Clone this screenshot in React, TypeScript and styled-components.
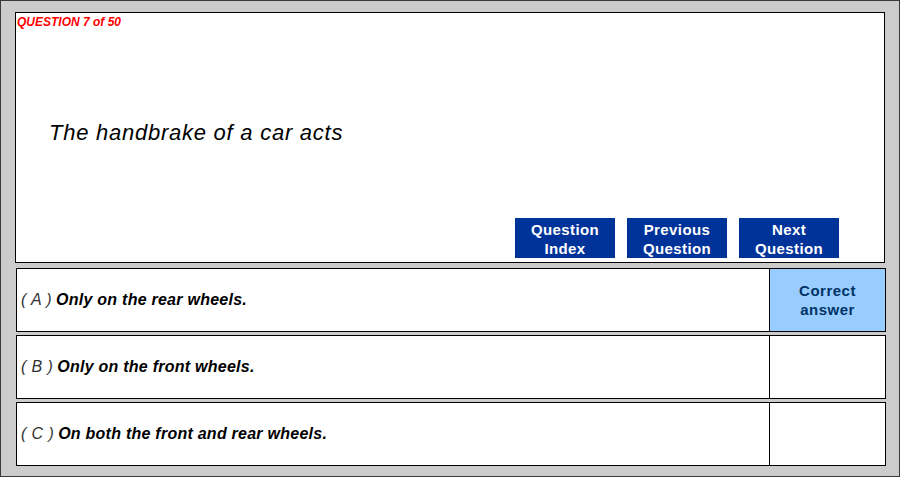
import styled, { createGlobalStyle } from 'styled-components'

const Global = createGlobalStyle`
  html, body {
    margin: 0;
    padding: 0;
    background: #ffffff;
    font-family: Arial, "Liberation Sans", sans-serif;
  }
`

const Frame = styled.div`
  width: 900px;
  height: 477px;
  box-sizing: border-box;
  border: 1px solid #3a3a3a;
  background: #cccccc;
  padding: 11px 14px 0 14px;
`

const QuestionPanel = styled.div`
  width: 870px;
  height: 251px;
  box-sizing: border-box;
  border: 1px solid #000;
  background: #fff;
  display: flex;
  flex-direction: column;
`

const Counter = styled.div`
  margin: 2px 0 0 1px;
  font-size: 12px;
  line-height: 14px;
  font-weight: bold;
  font-style: italic;
  color: #ff0000;
`

const Prompt = styled.div`
  margin: 91px 0 0 33px;
  font-size: 22px;
  line-height: 26px;
  font-style: italic;
  letter-spacing: 0.75px;
  color: #000;
`

const NavBar = styled.div`
  margin: auto 45px 4px 0;
  display: flex;
  justify-content: flex-end;
  gap: 12px;
`

const NavButton = styled.button`
  width: 100px;
  height: 40px;
  padding: 1px 0 0 0;
  border: none;
  background: #003399;
  color: #fff;
  font-family: Arial, "Liberation Sans", sans-serif;
  font-size: 15px;
  font-weight: bold;
  line-height: 19px;
  letter-spacing: 0.4px;
  text-align: center;
  cursor: pointer;
`

const Answers = styled.div`
  margin: 5px 0 0 1px;
  display: flex;
  flex-direction: column;
  gap: 3px;
`

const AnswerRow = styled.div`
  width: 870px;
  height: 64px;
  box-sizing: border-box;
  border: 1px solid #000;
  background: #fff;
  display: flex;
`

const AnswerText = styled.div`
  flex: 1;
  display: flex;
  align-items: center;
  padding-left: 4px;
  font-size: 16px;
  font-style: italic;
  font-weight: bold;
  letter-spacing: 0.25px;
  color: #000;
`

const Letter = styled.span`
  font-weight: normal;
  font-size: 16px;
  letter-spacing: 0.4px;
  color: #333;
  margin-right: 4px;
`

const ResultCell = styled.div<{ $correct?: boolean }>`
  width: 116px;
  box-sizing: border-box;
  border-left: 1px solid #000;
  background: ${p => (p.$correct ? '#99ccff' : '#fff')};
  display: flex;
  align-items: center;
  justify-content: center;
  text-align: center;
  font-size: 15px;
  line-height: 19px;
  font-weight: bold;
  letter-spacing: 0.5px;
  color: #003366;
`

const answers = [
  { letter: 'A', text: 'Only on the rear wheels.', correct: true },
  { letter: 'B', text: 'Only on the front wheels.', correct: false },
  { letter: 'C', text: 'On both the front and rear wheels.', correct: false }
]

export default function App () {
  return (
    <>
      <Global />
      <Frame>
        <QuestionPanel>
          <Counter>QUESTION 7 of 50</Counter>
          <Prompt>The handbrake of a car acts</Prompt>
          <NavBar>
            <NavButton>Question<br />Index</NavButton>
            <NavButton>Previous<br />Question</NavButton>
            <NavButton>Next<br />Question</NavButton>
          </NavBar>
        </QuestionPanel>
        <Answers>
          {answers.map(a => (
            <AnswerRow key={a.letter}>
              <AnswerText>
                <Letter>( {a.letter} )</Letter>
                {a.text}
              </AnswerText>
              <ResultCell $correct={a.correct}>
                {a.correct && <>Correct<br />answer</>}
              </ResultCell>
            </AnswerRow>
          ))}
        </Answers>
      </Frame>
    </>
  )
}
